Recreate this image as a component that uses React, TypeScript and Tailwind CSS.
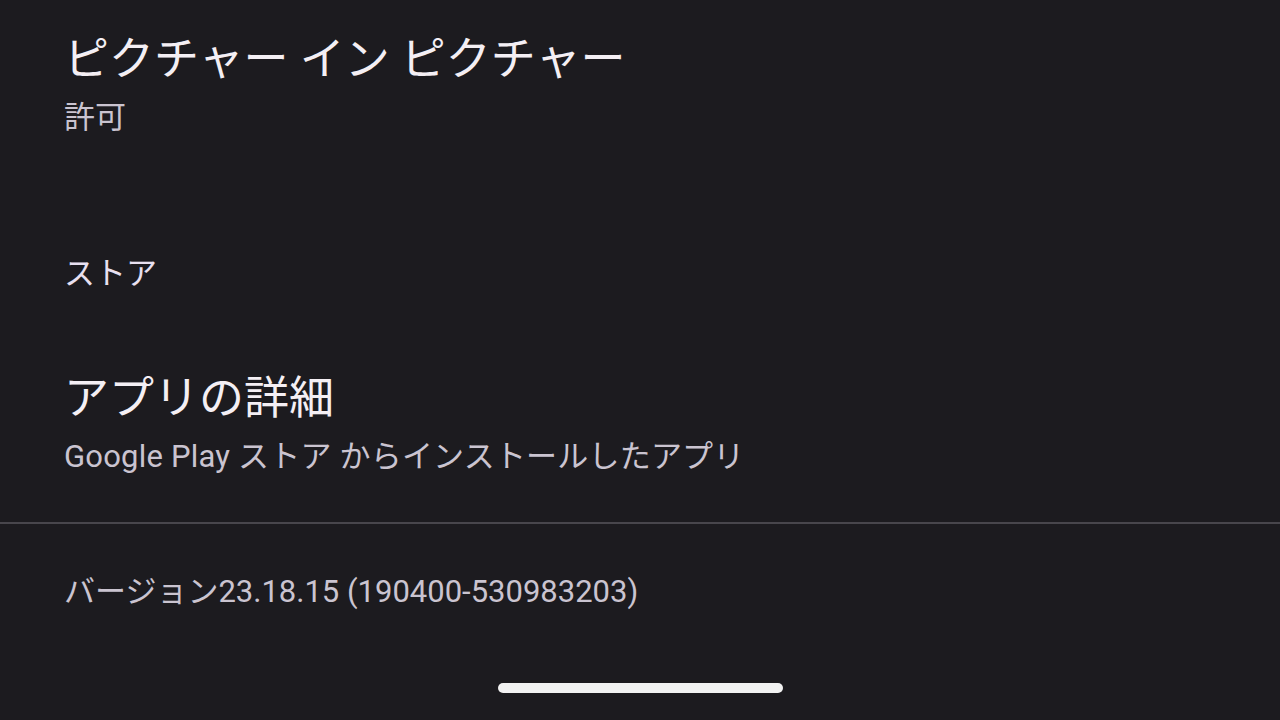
export default function App() {
  return (
    <div
      className="w-[1280px] h-[720px] overflow-hidden bg-[#1c1b1f] flex flex-col"
      style={{ fontFamily: 'Roboto, "Noto Sans CJK JP", sans-serif' }}
    >
      {/* ピクチャー イン ピクチャー */}
      <div className="pl-[64px] pt-[32px]">
        <div className="text-[45px] leading-[56px] text-[#f4eff4]">ピクチャー イン ピクチャー</div>
        <div className="mt-[10px] text-[31px] leading-[40px] text-[#cac4d0]">許可</div>
      </div>

      {/* ストア */}
      <div className="pl-[64px] mt-[116px] text-[31px] leading-[40px] text-[#e8e0f0]">ストア</div>

      {/* アプリの詳細 */}
      <div className="pl-[64px] mt-[77px]">
        <div className="text-[45px] leading-[56px] text-[#f4eff4]">アプリの詳細</div>
        <div className="mt-[10px] text-[31px] leading-[40px] tracking-[0.2px] text-[#cac4d0]">
          Google Play ストア からインストールしたアプリ
        </div>
      </div>

      <div className="mt-[45px] h-[2px] bg-[#48464c]" />

      <div className="pl-[64px] mt-[48px] text-[31px] leading-[40px] text-[#cac4d0]">
        バージョン23.18.15 (190400-530983203)
      </div>

      <div className="mt-[71px] flex justify-center">
        <div className="w-[285px] h-[10px] rounded-full bg-[#f2f2f2]" />
      </div>
    </div>
  )
}
